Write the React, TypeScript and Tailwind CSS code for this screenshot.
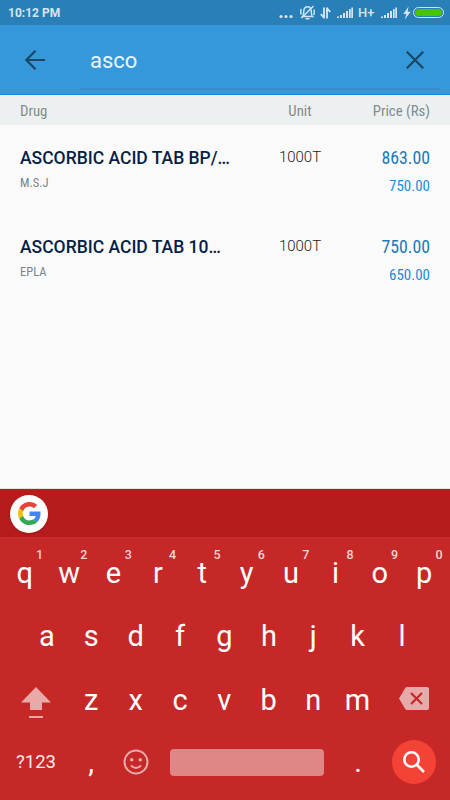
interface IDrug {
    name: string
    maker: string
    unit: string
    price: string
    cost: string
}

const drugs: IDrug[] = [
    { name: "ASCORBIC ACID TAB BP/…", maker: "M.S.J", unit: "1000T", price: "863.00", cost: "750.00" },
    { name: "ASCORBIC ACID TAB 10…", maker: "EPLA", unit: "1000T", price: "750.00", cost: "650.00" },
]

const condensed = "font-['Roboto_Condensed',Roboto,sans-serif] [font-stretch:75%]"

const Signal = () => (
    <svg width="16" height="12" viewBox="0 0 16 12" fill="currentColor">
        <path d="M0 9.500h2V11H0zM3 8h2v3H3zM6 6h2v5H6zM9 4h2v7H9zM12 2h1.700v9H12zM14.300 .5H16V11h-1.700z" />
    </svg>
)

const StatusBar = () => (
    <div className="flex h-[25px] items-center bg-[#297fb8] pl-2 pr-[6px] text-[#d4e5f1]">
        <div className="text-xs font-bold leading-3">10:12 PM</div>
        <div className="ml-auto flex items-center">
            <svg width="14" height="12" viewBox="0 0 14 12" fill="currentColor">
                <circle cx="2" cy="9.500" r="1.600" />
                <circle cx="7" cy="9.500" r="1.600" />
                <circle cx="12" cy="9.500" r="1.600" />
            </svg>
            <svg className="ml-[7px]" width="15" height="15" viewBox="0 0 15 15" fill="none" stroke="currentColor" strokeWidth="1.500">
                <path d="M2.500 11.500C4 10 3.500 7.500 3.800 5.500 4.200 3 5.500 1.800 7.500 1.800s3.300 1.200 3.700 3.700c.3 2-.2 4.500 1.300 6zM5.500 13.700h4M13.500 1L1.500 13M1.300 4C.5 5.500.5 7.500 1.200 9.500M13.700 4.500c.8 1.500.8 3.500.1 5.500" />
            </svg>
            <svg className="ml-[5px]" width="11" height="12" viewBox="0 0 11 12" fill="none" stroke="currentColor" strokeWidth="1.900">
                <path d="M4 .5v11M4 10.700L.8 7.200M7 11.500V.5M7 1.300l3.200 3.500" />
            </svg>
            <div className="ml-[6px]"><Signal /></div>
            <div className="ml-[5px] w-[17px] text-[13px] font-medium leading-3">H+</div>
            <div className="ml-[6px]"><Signal /></div>
            <svg className="ml-[6px]" width="8" height="14" viewBox="0 0 8 14" fill="currentColor">
                <path d="M5.500 .5L.3 8h3L1.800 13.500 7.700 5.800h-3z" />
            </svg>
            <div className="ml-[2px] h-[11px] w-[31px] rounded-full border border-[#d4e5f1] p-px">
                <div className="h-full rounded-full bg-[#48c400]" />
            </div>
        </div>
    </div>
)

const SearchBar = () => (
    <div className="flex h-[70px] border-b border-[#1588d8] bg-[#3598db] pl-[23px] pr-[10px]">
        <svg className="mt-[23px]" width="24" height="24" viewBox="0 0 24 24" fill="none" stroke="#1b4663" strokeWidth="2.200">
            <path d="M22 12H3.500M12.500 2.800L3.300 12l9.200 9.200" />
        </svg>
        <div className="ml-[33px] flex h-[65px] flex-1 justify-between border-b-2 border-[#318ed0] pl-[10px] pr-[15px]">
            <div className="mt-[20px] text-[22px] leading-8 text-[#ebf5fb]">asco</div>
            <svg className="mt-[25px]" width="20" height="20" viewBox="0 0 20 20" fill="none" stroke="#1b4663" strokeWidth="2.200">
                <path d="M1.800 1.800l16.400 16.400M18.200 1.800L1.800 18.200" />
            </svg>
        </div>
    </div>
)

const DrugRow = (props: IDrug) => (
    <div className="flex h-[88.5px] px-5 pt-5">
        <div className="w-[240px]">
            <div className="whitespace-nowrap pt-px text-[17.5px] font-medium leading-6 text-[#061f45]">{props.name}</div>
            <div className={`mt-1 text-[12.5px] leading-[18px] text-[#75868a] ${condensed}`}>{props.maker}</div>
        </div>
        <div className="w-20 text-center text-[15px] font-light leading-6 text-[#222]">{props.unit}</div>
        <div className={`flex-1 text-right ${condensed}`}>
            <div className="mt-px text-[17.8px] leading-6 text-[#1f78b8]">{props.price}</div>
            <div className="mt-[6px] text-[15px] leading-[20px] text-[#1a8cdb]">{props.cost}</div>
        </div>
    </div>
)

const Key = (props: { label: string; hint?: string }) => (
    <div className="relative w-[44.4px] text-center text-[29px] leading-[34px] text-white">
        {props.label}
        {props.hint && (
            <span className="absolute right-0 -top-[9px] w-[15px] text-center text-[12.5px] font-medium leading-4 text-[#f4d4d4]">{props.hint}</span>
        )}
    </div>
)

const GoogleLogo = () => (
    <svg width="23" height="23" viewBox="0 0 48 48">
        <path fill="#ea4335" d="M24 9.500c3.540 0 6.710 1.220 9.210 3.600l6.850-6.850C35.900 2.380 30.470 0 24 0 14.620 0 6.510 5.380 2.560 13.220l7.980 6.190C12.430 13.720 17.740 9.500 24 9.500z" />
        <path fill="#4285f4" d="M46.980 24.550c0-1.570-.15-3.090-.38-4.550H24v9.020h12.940c-.58 2.960-2.260 5.480-4.780 7.180l7.730 6c4.510-4.180 7.090-10.360 7.090-17.650z" />
        <path fill="#fbbc05" d="M10.530 28.590c-.48-1.450-.76-2.990-.76-4.590s.27-3.140.76-4.590l-7.980-6.190C.92 16.460 0 20.120 0 24c0 3.880.92 7.540 2.560 10.780l7.970-6.190z" />
        <path fill="#34a853" d="M24 48c6.480 0 11.930-2.130 15.890-5.810l-7.730-6c-2.150 1.450-4.920 2.300-8.160 2.300-6.260 0-11.570-4.220-13.470-9.910l-7.980 6.190C6.510 42.620 14.620 48 24 48z" />
    </svg>
)

const Keyboard = () => (
    <div className="h-[311px] bg-[#c62828]">
        <div className="flex h-[49px] items-center border-b border-[#c92f2f] bg-[#b51c1b] px-[10px] pt-px">
            <div className="flex h-[38px] w-[38px] items-center justify-center rounded-full bg-white shadow-sm"><GoogleLogo /></div>
        </div>
        <div className="flex justify-center pr-px pt-[18px]">
            {"qwertyuiop".split("").map((k, i) => <Key key={k} label={k} hint={String((i + 1) % 10)} />)}
        </div>
        <div className="flex justify-center pr-px pt-[29px]">
            {"asdfghjkl".split("").map((k) => <Key key={k} label={k} />)}
        </div>
        <div className="flex h-[65px] pt-[30px]">
            <div className="flex w-[69px] justify-center pl-[3px] pt-1">
                <svg width="30" height="32" viewBox="0 0 30 32" fill="#e8a9a9">
                    <path d="M15 0L0 15.500h9V23h12v-7.500h9zM8 29h14v2H8z" />
                </svg>
            </div>
            {"zxcvbnm".split("").map((k) => <Key key={k} label={k} />)}
            <svg className="ml-[19px] mt-1" width="30" height="23" viewBox="0 0 30 23">
                <path fill="#e8a9a9" d="M8 0h20q2 0 2 2v19q0 2-2 2H8q-1 0-1.600-.8L0 11.500 6.400.8Q7 0 8 0z" />
                <path d="M12 6l11 11M23 6L12 17" stroke="#c62828" strokeWidth="2.200" />
            </svg>
        </div>
        <div className="mt-[22px] flex h-11 items-center">
            <div className="w-[69px] pl-[3px] pt-[2px] text-center text-[18.5px] text-[#fbeaea]">?123</div>
            <Key label="," />
            <div className="flex w-[44.4px] justify-center">
                <svg width="26" height="26" viewBox="0 0 26 26" fill="none" stroke="#e8a9a9" strokeWidth="2">
                    <circle cx="13" cy="13" r="11.500" />
                    <path d="M8 16.500q5 5 10 0" />
                    <circle cx="8.700" cy="10.700" r="1.800" fill="#e8a9a9" stroke="none" />
                    <circle cx="17.300" cy="10.700" r="1.800" fill="#e8a9a9" stroke="none" />
                </svg>
            </div>
            <div className="ml-[12px] h-[27px] w-[154px] rounded bg-[#de8786]" />
            <div className="ml-[12px]"><Key label="." /></div>
            <div className="ml-[12px] flex h-11 w-11 items-center justify-center rounded-full bg-[#f44336]">
                <svg width="24" height="24" viewBox="0 0 24 24" fill="none" stroke="#fff" strokeWidth="2.600">
                    <circle cx="9.500" cy="9.500" r="7.200" />
                    <path d="M14.500 14.500l7.500 7.500" />
                </svg>
            </div>
        </div>
    </div>
)

export default function App() {
    return (
        <div className="flex h-[800px] w-[450px] flex-col overflow-hidden bg-[#fafafa] font-[Roboto,sans-serif]">
            <StatusBar />
            <SearchBar />
            <div className={`flex h-[30px] items-center bg-[#ecf0f1] px-5 pt-[2px] text-[14.8px] text-[#7f8c8d] ${condensed}`}>
                <div className="w-[240px]">Drug</div>
                <div className="w-20 text-center">Unit</div>
                <div className="flex-1 text-right">Price (Rs)</div>
            </div>
            <div className="flex-1 border-b border-[#e0e0e0]">
                {drugs.map((d) => <DrugRow key={d.name} {...d} />)}
            </div>
            <Keyboard />
        </div>
    )
}
